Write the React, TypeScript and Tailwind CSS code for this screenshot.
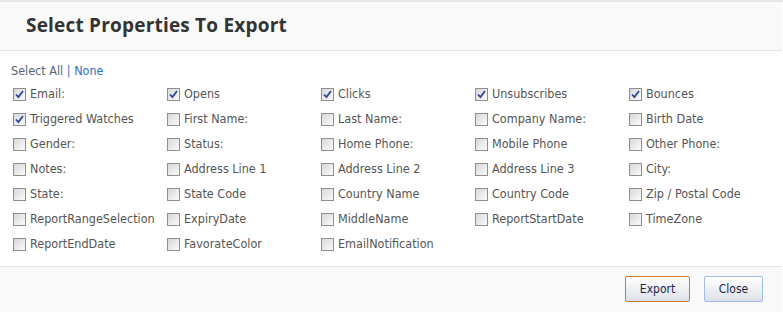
import { useState } from 'react';

const FIELDS = [
  ['Email:', true], ['Opens', true], ['Clicks', true], ['Unsubscribes', true], ['Bounces', true],
  ['Triggered Watches', true], ['First Name:', false], ['Last Name:', false], ['Company Name:', false], ['Birth Date', false],
  ['Gender:', false], ['Status:', false], ['Home Phone:', false], ['Mobile Phone', false], ['Other Phone:', false],
  ['Notes:', false], ['Address Line 1', false], ['Address Line 2', false], ['Address Line 3', false], ['City:', false],
  ['State:', false], ['State Code', false], ['Country Name', false], ['Country Code', false], ['Zip / Postal Code', false],
  ['ReportRangeSelection', false], ['ExpiryDate', false], ['MiddleName', false], ['ReportStartDate', false], ['TimeZone', false],
  ['ReportEndDate', false], ['FavorateColor', false], ['EmailNotification', false],
] as const;

function Box({ checked }: { checked: boolean }) {
  return (
    <span className="w-[13px] h-[13px] shrink-0 border border-[#8f8f8f] bg-gradient-to-br from-[#d8d8d8] to-[#fbfbfb] flex items-center justify-center">
      {checked && (
        <svg width="9" height="9" viewBox="0 0 9 9">
          <path d="M1 4.5 L3.4 7 L8 1" fill="none" stroke="#2f4595" strokeWidth="1.8" />
        </svg>
      )}
    </span>
  );
}

export default function App() {
  const [checked, setChecked] = useState<boolean[]>(FIELDS.map(f => f[1]));

  const toggle = (i: number) => setChecked(prev => prev.map((v, j) => (j === i ? !v : v)));

  return (
    <div className="w-[783px] h-[312px] bg-white flex flex-col border-t-2 border-[#e6e6e6] font-['DejaVu_Sans_Condensed','DejaVu_Sans',sans-serif]">
      <div className="h-[49px] bg-[#f9f9f9] border-b border-[#e2e2e2] flex items-center pl-[26px] mr-[1px]">
        <h1 className="font-['Open_Sans',sans-serif] font-bold text-[19px] text-[#333333] tracking-[0.2px] pb-[1px]">
          Select Properties To Export
        </h1>
      </div>

      <div className="flex-1 pt-[12px] pl-[11px]">
        <div className="text-[12.5px] leading-[16px] text-[#5b6470]">
          <button className="hover:underline" onClick={() => setChecked(checked.map(() => true))}>Select All</button>
          <span className="text-[#2d6fc0]"> | </span>
          <button className="text-[#2d6fc0] hover:underline" onClick={() => setChecked(checked.map(() => false))}>None</button>
        </div>
        <div className="grid grid-cols-[154px_154px_154px_154px_154px] pl-[2px] mt-[3px]">
          {FIELDS.map(([label], i) => (
            <label key={label} className="h-[25px] flex items-center gap-[4px] cursor-pointer" onClick={() => toggle(i)}>
              <Box checked={checked[i]} />
              <span className="text-[12.5px] text-[#555555] whitespace-nowrap">{label}</span>
            </label>
          ))}
        </div>
      </div>

      <div className="h-[46px] bg-[#f9f9f9] border-t border-[#e2e2e2] flex items-center justify-end gap-[14px] pr-[19px] pb-[1px] mr-[1px]">
        <button className="w-[65px] h-[26px] rounded-[2px] border border-[#d07a2c] bg-gradient-to-b from-[#ffffff] to-[#dde1e7] text-[12px] text-[#1b2647]">
          Export
        </button>
        <button className="w-[59px] h-[26px] rounded-[2px] border border-[#9fbcea] bg-gradient-to-b from-[#ffffff] to-[#dde1e7] text-[12px] text-[#1b2647]">
          Close
        </button>
      </div>
    </div>
  );
}
